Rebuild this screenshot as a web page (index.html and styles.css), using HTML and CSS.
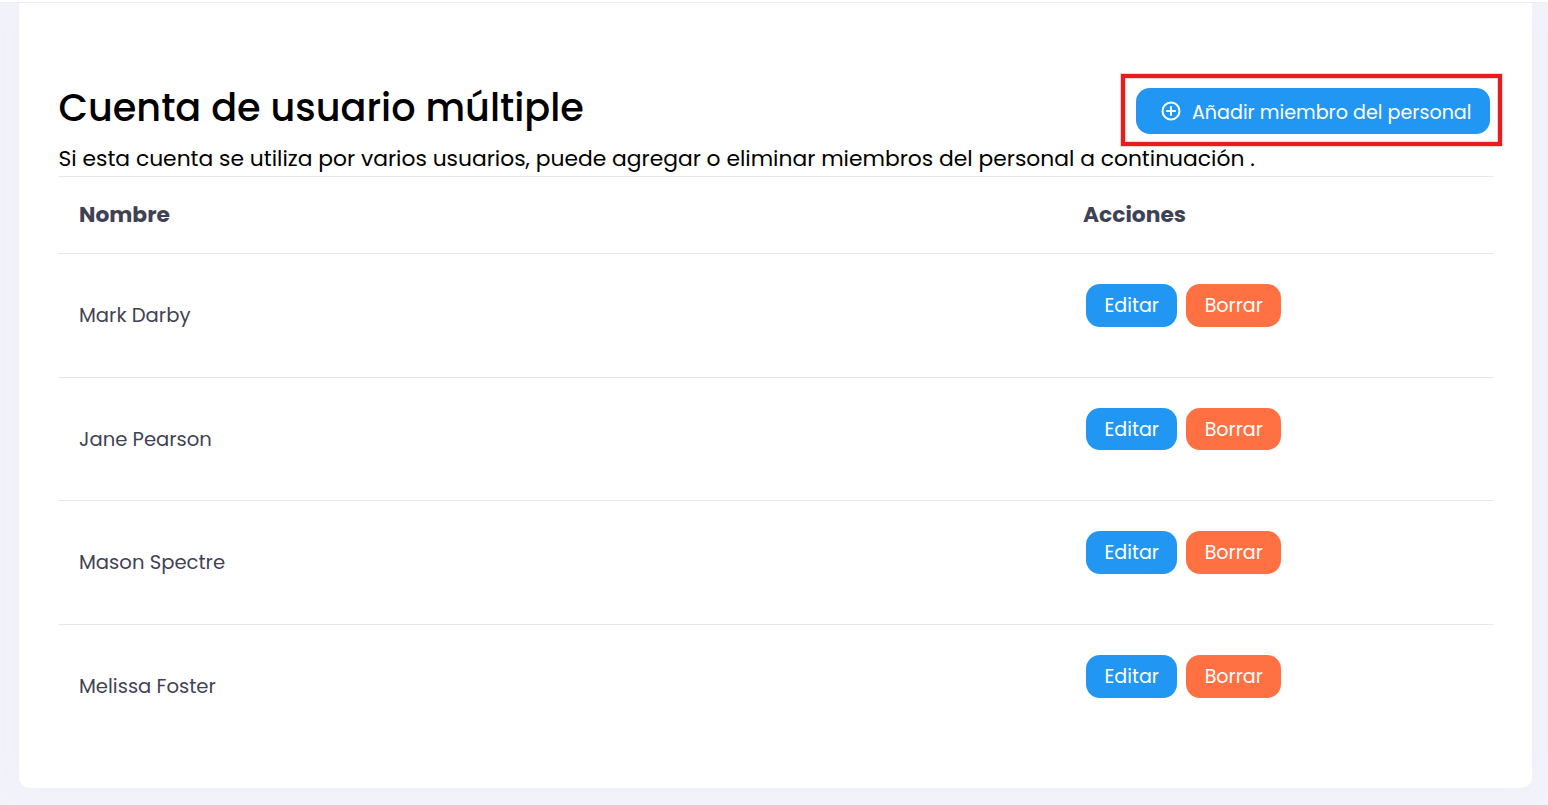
FILE: index.html
```html
<!DOCTYPE html>
<html lang="es">
<head>
  <meta charset="UTF-8">
  <title>Cuenta de usuario múltiple</title>
  <meta name="viewport" content="width=device-width, initial-scale=1.0">
  <link rel="stylesheet" href="styles.css">
</head>
<body>
  <div class="topbar"></div>

  <div class="card">
    <div class="card-header">
      <h2>Cuenta de usuario múltiple</h2>
      <div class="add-wrap">
        <button class="btn btn-add">
          <svg viewBox="0 0 20 20" width="20" height="20" fill="none" stroke="currentColor" stroke-width="2">
            <circle cx="10" cy="10" r="8.5"/>
            <path d="M10 5.2v9.6M5.2 10h9.6"/>
          </svg>
          <span>Añadir miembro del personal</span>
        </button>
      </div>
    </div>
    <p class="intro">Si esta cuenta se utiliza por varios usuarios, puede agregar o eliminar miembros del personal a continuación .</p>

    <table class="staff">
      <thead>
        <tr>
          <th class="col-name">Nombre</th>
          <th>Acciones</th>
        </tr>
      </thead>
      <tbody>
        <tr>
          <td>Mark Darby</td>
          <td>
            <div class="actions">
              <button class="btn btn-edit">Editar</button>
              <button class="btn btn-delete">Borrar</button>
            </div>
          </td>
        </tr>
        <tr>
          <td>Jane Pearson</td>
          <td>
            <div class="actions">
              <button class="btn btn-edit">Editar</button>
              <button class="btn btn-delete">Borrar</button>
            </div>
          </td>
        </tr>
        <tr>
          <td>Mason Spectre</td>
          <td>
            <div class="actions">
              <button class="btn btn-edit">Editar</button>
              <button class="btn btn-delete">Borrar</button>
            </div>
          </td>
        </tr>
        <tr>
          <td>Melissa Foster</td>
          <td>
            <div class="actions">
              <button class="btn btn-edit">Editar</button>
              <button class="btn btn-delete">Borrar</button>
            </div>
          </td>
        </tr>
      </tbody>
    </table>
  </div>
</body>
</html>
```
FILE: styles.css
```css
* {
  margin: 0;
  padding: 0;
  box-sizing: border-box;
  font-family: Poppins, Inter, sans-serif;
}

body {
  background: #f3f4fa;
  height: 805px;
  overflow: hidden;
}

.topbar {
  position: relative;
  height: 3px;
  background: #fff;
  border-bottom: 1px solid #ebecf1;
  z-index: 1;
}

/* Card */
.card {
  margin: 0 16px 0 19px;
  height: 785px;
  padding: 85px 39px 0;
  background: #fff;
  border-radius: 0 0 11px 11px;
  box-shadow: 0 0 30px rgba(235, 236, 250, 0.9);
}

.card-header {
  display: flex;
  justify-content: space-between;
  height: 46px;
  padding-right: 3px;
}

.card-header h2 {
  padding-left: 0.5px;
  font-size: 38.2px;
  font-weight: 500;
  line-height: 40px;
  color: #000;
}

.intro {
  height: 42px;
  padding: 10px 0 0 0.5px;
  font-size: 21.82px;
  line-height: 30px;
  color: #000;
  white-space: nowrap;
}

/* Buttons */
.btn {
  border: none;
  border-radius: 14px;
  color: #fff;
  font-size: 19.1px;
  line-height: 41.6px;
  padding: 1px 0 0 0.5px;
  cursor: pointer;
  white-space: nowrap;
}

.add-wrap {
  position: relative;
}

.add-wrap::after {
  content: "";
  position: absolute;
  top: -14px;
  left: -15px;
  right: -12px;
  bottom: -12px;
  border: 4px solid #e81c1c;
  box-shadow: 0 0 0 1px rgba(232, 28, 28, 0.2), inset 0 0 0 1px rgba(232, 28, 28, 0.2);
  pointer-events: none;
}

.btn-add {
  display: flex;
  align-items: center;
  gap: 11px;
  width: 354px;
  height: 46px;
  padding: 0 0 0 25px;
  background: #2196f3;
}

.btn-add span {
  padding-top: 3px;
}

.btn-edit {
  width: 91px;
  background: #2196f3;
}

.btn-delete {
  width: 95px;
  background: #ff7043;
}

/* Staff table */
.staff {
  width: 100%;
  border-collapse: collapse;
  table-layout: fixed;
  color: #3f4254;
}

.staff th {
  height: 77px;
  padding: 0 21px 2px;
  border-top: 1px solid #e6e6ef;
  text-align: left;
  font-size: 21.8px;
  font-weight: 700;
}

.staff .col-name {
  width: 1004px;
}

.staff td {
  height: 123.67px;
  padding: 0 21px 0.6px;
  border-top: 1px solid #e7e7e9;
  font-size: 19.6px;
}

.actions {
  display: flex;
  gap: 9px;
  margin: 0 0 19.4px 3px;
}
```
